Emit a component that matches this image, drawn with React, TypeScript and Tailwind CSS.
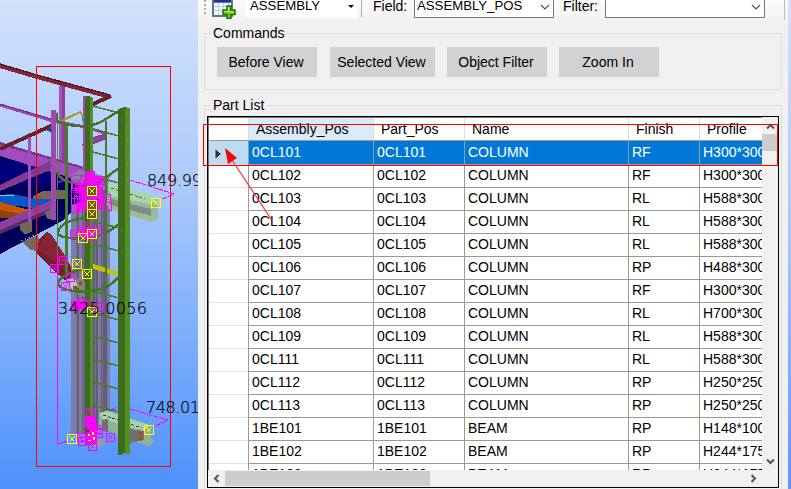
import React from "react";

const columns = ["Assembly_Pos", "Part_Pos", "Name", "Finish", "Profile"];

const rows: string[][] = [
  ["0CL101", "0CL101", "COLUMN", "RF", "H300*300"],
  ["0CL102", "0CL102", "COLUMN", "RF", "H300*300"],
  ["0CL103", "0CL103", "COLUMN", "RL", "H588*300"],
  ["0CL104", "0CL104", "COLUMN", "RL", "H588*300"],
  ["0CL105", "0CL105", "COLUMN", "RL", "H588*300"],
  ["0CL106", "0CL106", "COLUMN", "RP", "H488*300"],
  ["0CL107", "0CL107", "COLUMN", "RF", "H300*300"],
  ["0CL108", "0CL108", "COLUMN", "RL", "H700*300"],
  ["0CL109", "0CL109", "COLUMN", "RL", "H588*300"],
  ["0CL111", "0CL111", "COLUMN", "RL", "H588*300"],
  ["0CL112", "0CL112", "COLUMN", "RP", "H250*250"],
  ["0CL113", "0CL113", "COLUMN", "RP", "H250*250"],
  ["1BE101", "1BE101", "BEAM", "RP", "H148*100"],
  ["1BE102", "1BE102", "BEAM", "RP", "H244*175"],
  ["1BE103", "1BE103", "BEAM", "RP", "H244*175"],
];

const gridCols = "grid grid-cols-[40px_125px_91px_164px_71px_63px]";

function Node({ x, y, c, s }: { x: number; y: number; c: string; s: number }) {
  const h = s / 2;
  return (
    <g stroke={c} fill="none">
      <rect x={x - h} y={y - h} width={s} height={s} />
      <path d={`M${x - h + 2} ${y - h + 2}l${s - 4} ${s - 4}m0 ${4 - s}l${4 - s} ${s - 4}`} />
    </g>
  );
}

const magentaNodes = [
  [90, 175], [84, 180], [96, 180], [100, 180], [76, 184], [75, 194], [78, 200], [98, 186], [106, 198], [107, 206],
  [86, 191], [98, 204], [80, 207], [75, 208], [88, 226], [98, 230], [74, 234], [81, 231], [92, 236],
  [63, 260], [54, 268], [70, 277], [65, 286], [75, 305], [81, 302], [86, 304], [99, 307],
  [90, 412], [90, 420], [98, 429], [98, 433], [81, 437], [92, 446], [110, 437], [82, 441],
];
const yellowNodes = [
  [91, 190], [91, 204], [91, 213], [155, 202], [82, 237], [91, 233], [76, 263], [86, 273], [91, 311], [71, 438], [148, 429],
];

function ModelView() {
  return (
    <svg className="block shrink-0" width="198" height="489" viewBox="0 0 198 489" shapeRendering="crispEdges">
      <defs>
        <linearGradient id="sky" x1="0" y1="0" x2="0" y2="1">
          <stop offset="0" stopColor="#d3e2fd" />
          <stop offset="0.4" stopColor="#a9c8fc" />
          <stop offset="1" stopColor="#4e91fb" />
        </linearGradient>
      </defs>
      <rect width="198" height="489" fill="url(#sky)" />

      {/* platform girder and floor framing */}
      <path d="M0 144L84 169V200L62 221L0 254Z" fill="#00005c" />
      <path d="M0 160L50 163L75 177V183L0 186Z" fill="#000078" />
      <path d="M0 143L84 168V182L0 156Z" fill="#a34abf" />
      <path d="M0 142L84 167V169L0 145Z" fill="#73378d" />
      <path d="M0 195L12 194L34 198L55 190V203L35 208L0 204Z" fill="#0956c9" />
      <path d="M0 202L18 207L34 211L26 220L0 216Z" fill="#ca5605" />
      <path d="M0 210L25 215L22 219L0 218Z" fill="#8e4312" />
      <path d="M33 196L43 191L65 190V199H34Z" fill="#75665e" />
      <path d="M0 185L51 160L55 168L0 191Z" fill="#813b8f" />
      <path d="M0 222L52 200V210L0 232Z" fill="#8d419e" />
      <path d="M0 230L52 208V212L0 234Z" fill="#582a69" />
      <path d="M20 224L32 220V232L25 234L20 230Z" fill="#6d6967" />
      <path d="M45 212L55 207V220L47 219Z" fill="#6d6967" />
      <path d="M22 242L38 235L41 252L31 250Z" fill="#706968" />
      <g fill="#b44e10">
        <path d="M36 196h3v3h-3zM41 195h2v4h-2zM46 194h2v3h-2zM28 225h3v2h-3zM28 229h2v3h-2zM53 213h3v2h-3zM53 217h2v3h-2zM31 241h4v2h-4zM34 245h3v2h-3z" />
      </g>
      <path d="M21 241L39 233" stroke="#888" strokeDasharray="2 2" />
      <path d="M0 196L14 195" stroke="#81c7ff" />

      {/* handrails */}
      <path d="M59 86h6v76l-6-3z" fill="#8a419e" />
      <path d="M59 86h3v74h-3z" fill="#a752bc" />
      <path d="M83 96h5v76h-5z" fill="#9e49b3" />
      <path d="M0 66L37 77L110 97" stroke="#82253a" strokeWidth="4" fill="none" />
      <path d="M0 64L37 75L110 95" stroke="#521827" strokeWidth="1.4" fill="none" />
      <path d="M111 96L93 104" stroke="#69202e" strokeWidth="4" />
      <path d="M0 105L53 121L85 127L105 133" stroke="#9b45b4" strokeWidth="3" fill="none" />
      <path d="M0 104L55 120" stroke="#653078" strokeWidth="1" />
      <path d="M0 149L53 125" stroke="#6c202a" strokeWidth="4" />
      <path d="M51 110h5v110h-5z" fill="#9e49b3" />
      <path d="M28 137h3v85h-3z" fill="#a14db7" />
      <path d="M90 138L107 133V139L91 145Z" fill="#83408f" />
      <path d="M82 145L105 136" stroke="#9a45aa" strokeWidth="2" />
      <path d="M57 123L80 112L83 116V121" stroke="#a79b19" strokeWidth="2" fill="none" />
      <path d="M47 130h5M50 127v5" stroke="#164c9d" strokeWidth="2" />
      <path d="M83 117v4" stroke="#009eaf" strokeWidth="2" />

      {/* diagonal brace */}
      <path d="M39 239L47 231L67 258L75 277L64 280L55 270L37 253Z" fill="#74202c" />
      <path d="M47 232L51 234L68 260L65 269L38 249Z" fill="#89233a" />
      <path d="M37 253L59 275" stroke="#481924" />

      {/* column shaft */}
      <path d="M71 190h39v238L71 435z" fill="#615d77" />
      <path d="M71 190h5v246h-5zM79 190h3v245h-3zM98 190h3v238h-3zM107 190h3v229h-3z" fill="#7e7ba7" />
      <path d="M76 195v239M83 195v239M95 195v239M102 195v230" stroke="#777090" />
      <path d="M71 175L79 170L91 173L109 177V190H71Z" fill="#8181a3" />
      <path d="M72 184h12v20h-12z" fill="#00005c" />
      <path d="M72 284L82 274L86 286V297L76 294Z" fill="#87807f" />
      <path d="M70 280L75 278L77 285L72 290Z" fill="#c8bebd" />
      <path d="M73 286h4v2h2v3h-3v-2h-3zM79 282h3v3h-3z" fill="#8d4c20" />

      {/* projecting beams */}
      <path d="M108 183L149 195L158 200L158 214L151 221L107 207Z" fill="#97b99d" />
      <path d="M108 183L149 194L158 202L149 204L110 196Z" fill="#a9d5aa" />
      <path d="M111 199L151 209V217L111 206Z" fill="#7d8f84" />
      <path d="M111 205L151 216L159 215L158 219L151 222L111 210Z" fill="#9bbd9e" />
      <path d="M111 188L145 199" stroke="#555f55" strokeDasharray="3 2" />
      <path d="M99 413L106 411L150 425L151 438L154 442L149 446L130 440L99 427Z" fill="#91b295" />
      <path d="M99 413L107 411L150 425L145 431L102 419Z" fill="#a9d1a9" />
      <path d="M102 420L108 419V432L102 431ZM130 429L144 431V440L130 443Z" fill="#6f716e" />
      <path d="M103 415L142 428" stroke="#525" strokeDasharray="3 2" />
      <path d="M139 432h3v3h-3zM139 437h3v3h-3z" fill="#a94e10" />
      <path d="M96 441L105 438L104 444L93 448Z" fill="#ac958f" />
      <path d="M93 264L117 271V276L93 269Z" fill="#c6bd05" />

      {/* caged ladder */}
      <g stroke="#477f27" strokeWidth="1.5" fill="none">
        {[105, 128, 151, 175, 220, 243, 290, 312, 335, 358, 381, 404].map((y) => (
          <path key={y} d={`M89 ${y}L119 ${y + 8}`} />
        ))}
      </g>
      <path d="M85 97l4-1 4 2v347h-8z" fill="#3b6b1b" />
      <path d="M90 97l3 2v346h-3z" fill="#529127" />
      <path d="M57.5 112V253" stroke="#47882d" />
      <path d="M65 125h3v148h-3z" fill="#477e25" />
      <path d="M105 121h2v165h-2z" fill="#467923" />
      <path d="M118 109l6-2 6 1v346h-4l-2-1-3 2h-3z" fill="#3d6d1c" />
      <path d="M125 108h5v346h-5z" fill="#509025" />
      <g stroke="#417624" strokeWidth="2.5" fill="none">
        <path d="M57 113V121C68 126 76 127 88 126C104 124 109 115 118 112" />
        <path d="M57 172C61 184 80 185 94 183C106 182 109 173 118 169" />
        <path d="M85 218C69 220 58 225 58 234C66 242 104 240 118 224" />
        <path d="M85 269C64 273 55 281 59 286C71 295 107 294 118 277" />
      </g>
      <path d="M121 119h1v2h-1zM121 136h1v2h-1zM121 160h1v2h-1zM121 182h1v2h-1zM121 229h1v2h-1zM121 252h1v2h-1zM84 154h1v2h-1z" fill="#ac5619" />

      {/* dimension lines */}
      <g stroke="#ff00ff" fill="none">
        <path d="M57.5 253V444L68 441" />
        <path d="M57 183L75 175L90 176M130 180L174 194L160 200" strokeDasharray="5 1" />
        <path d="M112 410L117 407M130 409L168 420L153 427" strokeDasharray="5 1" />
      </g>

      {/* bolt groups and selection nodes */}
      <path d="M87 171h7v6h6v10h3v11h2v6h-5v6H77v-8h3v-9h-5v-10h8v-4h4z" fill="#ff00ff" fillOpacity="0.85" />
      <path d="M80 229h7v-2h5v6h2v6H82zM73 301h12v8H73zM85 417h11v10h1v9v8H85v-9h2v-8h-2z" fill="#ff00ff" />
      <g fill="#304329">
        <path d="M76 185h2v2h-2zM79 195h2v2h-2zM96 181h2v2h-2zM87 179h2v1h-2zM84 185h2v1h-2zM97 199h2v2h-2zM87 419h1v1h-1zM91 423h2v1h-2zM87 430h2v2h-2z" />
      </g>
      {magentaNodes.map(([x, y], i) => (
        <Node key={i} x={x + 0.5} y={y + 0.5} c="#ff00ff" s={8} />
      ))}
      <path d="M88 434h2v2h-2zM92 432h2v3h-2zM88 440h3v1h-3zM93 437h2v3h-2z" fill="#ffff00" />
      <path d="M87 186h9v9h-9zM87 200h9v9h-9zM87 209h9v9h-9z" fill="#6b5426" />
      {yellowNodes.map(([x, y], i) => (
        <Node key={i} x={x + 1} y={y + 1} c="#ffff00" s={9} />
      ))}

      <rect x="36.5" y="66.5" width="134" height="400" stroke="#ff0000" fill="none" />
      <g fill="#000" stroke="#000" strokeWidth="0.2" className="font-['DejaVu_Sans'] text-[16px] font-extralight">
        <text x="147" y="186" textLength="55">849.99</text>
        <text x="58" y="314" textLength="89">3425.0056</text>
        <text x="146" y="413" textLength="54">748.01</text>
      </g>
    </svg>
  );
}

function TableIcon() {
  return (
    <svg className="mt-[-6px] shrink-0" width="25" height="25" viewBox="0 0 25 25">
      <rect x="0" y="0" width="21" height="23" fill="#66758a" />
      <rect x="2" y="1" width="17" height="7" fill="#14389c" />
      <rect x="2" y="9" width="17" height="12" fill="#f6f9ff" />
      <path d="M2 12.5h17M2 16.5h17M6.5 9v12M11.5 9v12M16.5 9v12" stroke="#bdcbe1" />
      <path d="M15 12h4v4h4v4.500h-4v4h-4v-4h-4v-4.500h4z" fill="#70cd0b" stroke="#19731a" strokeWidth="1.5" />
      <path d="M16.500 13v4.500h-4M17.500 18h4" stroke="#dcf95d" fill="none" />
    </svg>
  );
}

function Chevron({ turn = "" }: { turn?: string }) {
  return (
    <svg className={turn} width="9" height="7" viewBox="0 0 9 7" fill="none" stroke="#555" strokeWidth="2">
      <path d="M1 1.500l3.500 3.500L8 1.500" />
    </svg>
  );
}

function ComboChevron() {
  return (
    <svg width="10" height="7" viewBox="0 0 10 7" fill="none" stroke="#555" strokeWidth="1.2">
      <path d="M1 1l4 4 4-4" />
    </svg>
  );
}

function CommandButton({ label, width }: { label: string; width: string }) {
  return <button className={`h-[30px] bg-[#d2d2d2] pr-[2px] text-center ${width}`}>{label}</button>;
}

function PartGrid() {
  return (
    <div className="relative flex h-[372px] w-[572px] flex-col border border-black bg-[#f0f0f0]">
      <div className="flex h-[353px]">
        <div className="h-[353px] w-[554px] overflow-hidden border-l border-t border-[#777] bg-white">
          <div className={`${gridCols} h-[23px] border-b border-[#999]`}>
            <div className="border-r border-[#ddd]" />
            {columns.map((name, i) => (
              <div
                key={name}
                className={`h-[22px] border-r border-[#ddd] pl-[7px] leading-[22px] ${i === 0 ? "bg-[#d9ebf9]" : ""}`}
              >
                {name}
              </div>
            ))}
          </div>
          {rows.map((row, r) => (
            <div key={r} className={`${gridCols} h-[23px]`}>
              <div className={`flex items-center border-b border-r border-b-[#e2e2e2] border-r-[#999] pl-[5px] ${r === 0 ? "bg-[#bcdcf4]" : ""}`}>
                {r === 0 && (
                  <svg className="mt-[3px]" width="8" height="12" viewBox="0 0 8 12">
                    <path d="M1 .5L7.500 6L1 11.500z" fill="#333" stroke="#eee" strokeWidth="0.8" />
                  </svg>
                )}
              </div>
              {row.map((cell, c) => (
                <div
                  key={c}
                  className={`border-b border-r border-[#999] pl-[3px] leading-[23px] ${r === 0 ? "bg-[#0078d7] text-white" : ""}`}
                >
                  {cell}
                </div>
              ))}
            </div>
          ))}
        </div>
        <div className="flex w-4 flex-col items-center justify-between pb-[5px] pt-[6px]">
          <Chevron turn="rotate-180" />
          <div className="mb-auto mt-[4px] h-[17px] w-4 shrink-0 bg-[#cdcdcd]" />
          <Chevron />
        </div>
      </div>
      <div className="flex h-[17px] items-center pl-1 pr-[20px]">
        <Chevron turn="rotate-90" />
        <div className="ml-[4px] h-[15px] w-[205px] bg-[#cdcdcd]" />
        <div className="ml-auto">
          <Chevron turn="-rotate-90" />
        </div>
      </div>
    </div>
  );
}

export default function App() {
  return (
    <div className="relative flex h-[489px] w-[791px] overflow-hidden bg-[#f0f0f0] font-['Liberation_Sans',Arial,sans-serif] text-[14px] text-black">
      <ModelView />
      <main className="flex h-full w-[590px] flex-col">
        <header className="flex h-[25px] shrink-0 items-start bg-gradient-to-b from-[#fcfcfc] to-[#f0f0f0]">
          <div className="ml-[6px] mr-[6px] h-[14px] w-0 border-l-2 border-dotted border-[#aaa]" />
          <TableIcon />
          <div className="ml-[9px] flex h-[18px] w-[111px] items-start justify-between bg-white pl-[4px] pr-[3px] text-[13.2px]">
            <span className="mt-[-2px] leading-[16px]">ASSEMBLY</span>
            <span className="mt-[5px] border-x-[3px] border-t-[3px] border-x-transparent border-t-black" />
          </div>
          <div className="ml-1 h-[17px] w-px bg-[#aaa]" />
          <span className="ml-[11px] w-[41px] leading-[13px]">Field:</span>
          <div className="h-[18px] w-[140px] border border-t-0 border-[#777] bg-white pl-[2px] text-[13.2px]">
            <div className="flex items-start justify-between pr-[3px]">
              <span className="mt-[-2px] leading-[16px]">ASSEMBLY_POS</span>
              <span className="mt-1"><ComboChevron /></span>
            </div>
          </div>
          <span className="ml-[9px] w-[42px] leading-[13px]">Filter:</span>
          <div className="flex h-[18px] w-[160px] items-start justify-end border border-t-0 border-[#777] bg-white pr-[3px]">
            <span className="mt-1"><ComboChevron /></span>
          </div>
          <div className="ml-[19px] h-5 w-px bg-[#bbb]" />
        </header>
        <fieldset className="ml-[6px] h-[65px] w-[578px] shrink-0 border border-[#dcdcdc]">
          <legend className="ml-[6px] px-[2px] leading-[16px]">Commands</legend>
          <div className="mt-[6px] flex pl-3">
            <CommandButton label="Before View" width="mr-[13px] w-[100px]" />
            <CommandButton label="Selected View" width="mr-3 w-[105px]" />
            <CommandButton label="Object Filter" width="mr-3 w-[100px]" />
            <CommandButton label="Zoom In" width="w-[100px]" />
          </div>
        </fieldset>
        <fieldset className="ml-[6px] mt-[7px] h-[400px] w-[578px] shrink-0 border border-[#dcdcdc]">
          <legend className="ml-[6px] px-[2px] leading-[16px]">Part List</legend>
          <div className="ml-[2px] mt-[3px]">
            <PartGrid />
          </div>
        </fieldset>
      </main>
      <div className="w-[3px] bg-gradient-to-b from-[#d3e2fd] via-[#a4c3fc] to-[#6097f5]" />
      <svg className="pointer-events-none absolute left-0 top-0" width="791" height="489">
        <rect x="203.5" y="124.5" width="574" height="41" fill="none" stroke="#f00" />
        <path d="M271 219L232 160" stroke="#f33" strokeWidth="1.2" />
        <path d="M225 148L237 158L228 164Z" fill="#f00" />
      </svg>
    </div>
  );
}
